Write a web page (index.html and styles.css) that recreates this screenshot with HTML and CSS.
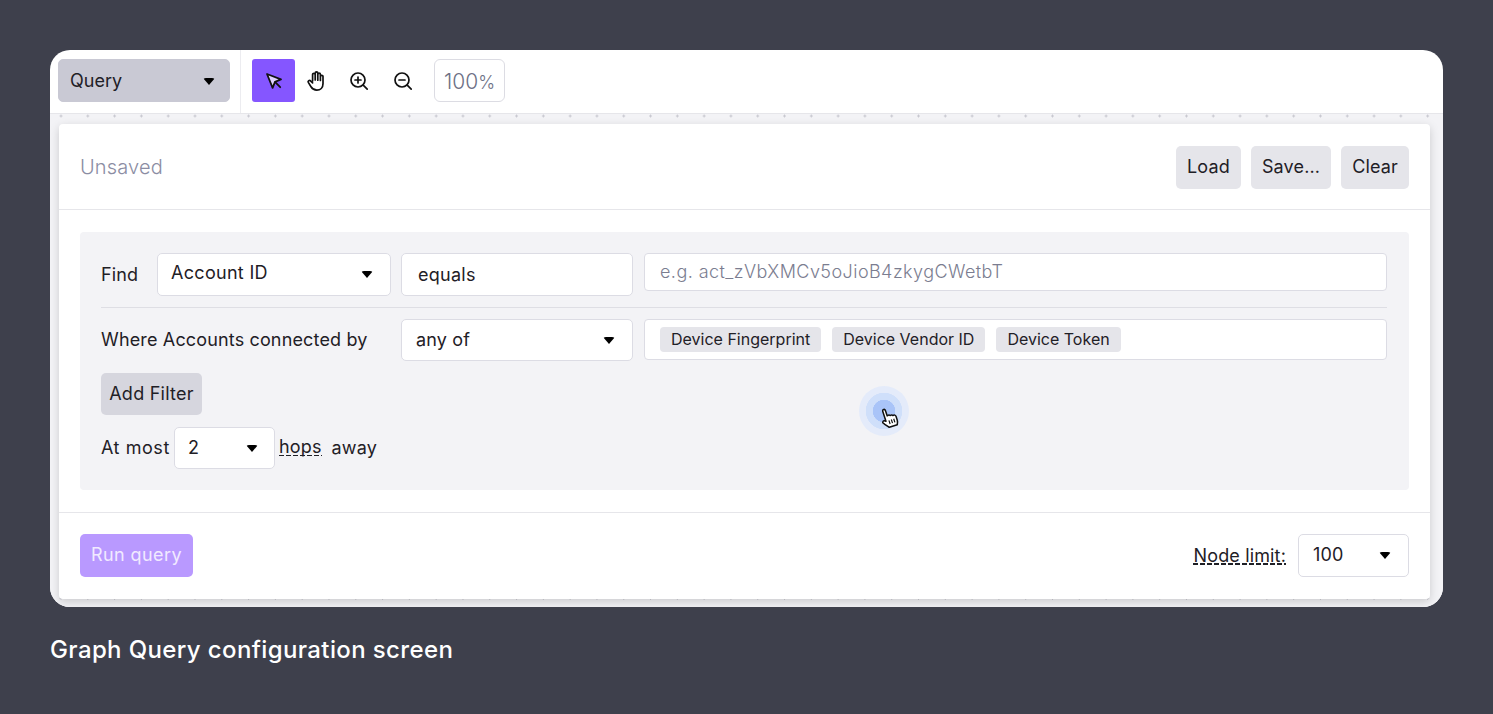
FILE: index.html
```html
<!DOCTYPE html>
<html lang="en">
<head>
    <meta charset="UTF-8">
    <title>Graph Query</title>
    <link rel="stylesheet" href="styles.css">
</head>
<body>
    <div class="frame">
        <div class="toolbar">
            <div class="toolbar-left">
                <div class="select select-mode"><span>Query</span><i class="caret"></i></div>
            </div>
            <div class="tools">
                <button class="tool tool-active">
                    <svg width="20" height="20" viewBox="0 0 20 20"><path d="M3 3l14 5.4-6 2.4-2.4 6z" fill="#e0d2ff" stroke="#111" stroke-width="1.8" stroke-linejoin="round"/><path d="M11.2 11.2l5 5" stroke="#111" stroke-width="1.8" stroke-linecap="round"/></svg>
                </button>
                <button class="tool tool-shift">
                    <svg width="22" height="22" viewBox="0 0 22 22" fill="none" stroke="#111" stroke-width="1.7" stroke-linecap="round" stroke-linejoin="round"><path d="M7.6 11V4.6a1.3 1.3 0 0 1 2.6 0V10M10.2 10V3.2a1.3 1.3 0 0 1 2.6 0V10M12.8 10.2V4.4a1.3 1.3 0 0 1 2.6 0v6M15.4 10.4V6.6a1.3 1.3 0 0 1 2.6 0v7.2c0 3.8-2.6 6.4-6.2 6.4-3 0-4.5-1.3-5.8-3.4l-2.7-4.4c-.8-1.4 1.2-2.6 2.2-1.5l2.1 2"/></svg>
                </button>
                <button class="tool tool-shift">
                    <svg width="20" height="20" viewBox="0 0 20 20" fill="none" stroke="#111" stroke-width="1.7" stroke-linecap="round"><circle cx="9" cy="9" r="7"/><path d="M14.2 14.2l4 4M9 6v6M6 9h6"/></svg>
                </button>
                <button class="tool">
                    <svg width="20" height="20" viewBox="0 0 20 20" fill="none" stroke="#111" stroke-width="1.7" stroke-linecap="round"><circle cx="9" cy="9" r="7"/><path d="M14.2 14.2l4 4M6 9h6"/></svg>
                </button>
                <div class="zoom-level">100<small>%</small></div>
            </div>
        </div>

        <div class="canvas">
            <div class="panel">
                <div class="panel-head">
                    <span class="query-name">Unsaved</span>
                    <div class="head-actions">
                        <button class="btn">Load</button>
                        <button class="btn">Save...</button>
                        <button class="btn">Clear</button>
                    </div>
                </div>

                <div class="panel-body">
                    <div class="filters">
                        <div class="row row-find">
                            <span class="label label-find">Find</span>
                            <div class="select select-field"><span class="nudge-up">Account ID</span><i class="caret"></i></div>
                            <div class="select select-op equals"><span>equals</span></div>
                            <div class="text-input placeholder">e.g. act_zVbXMCv5oJioB4zkygCWetbT</div>
                        </div>
                        <div class="row row-where">
                            <span class="label label-where">Where Accounts connected by</span>
                            <div class="select select-op"><span>any of</span><i class="caret"></i></div>
                            <div class="text-input tags">
                                <span class="tag">Device Fingerprint</span>
                                <span class="tag">Device Vendor ID</span>
                                <span class="tag">Device Token</span>
                            </div>
                        </div>
                        <button class="btn btn-filter">Add Filter</button>
                        <div class="row row-hops">
                            <span class="label label-most">At most</span>
                            <div class="select select-hops"><span>2</span><i class="caret"></i></div>
                            <span class="label dashed">hops</span>
                            <span class="label away">away</span>
                        </div>
                        <div class="click-mark">
                            <svg width="22" height="24" viewBox="0 0 20 22"><path d="M6.4 13V3.4c0-1.8 2.6-1.8 2.6 0v5.2l.4-.1c1.2-.5 2 0 2.3.7 1.1-.5 2-.1 2.3.7 1.6-.4 2.6.4 2.6 1.8v3.3c0 1.8-.5 3-1.3 4.2H7.6c-1-1.5-2.5-3.2-4-5-1.1-1.5.9-3 2.2-1.7z" fill="#fff" stroke="#111" stroke-width="1.4" stroke-linejoin="round"/><path d="M9.3 13v3.5M11.6 13v3.5M13.9 13v3.5" stroke="#111" stroke-width="1.1"/></svg>
                        </div>
                    </div>
                </div>

                <div class="panel-foot">
                    <button class="btn btn-run">Run query</button>
                    <div class="limit">
                        <span class="label dashed">Node limit:</span>
                        <div class="select select-limit"><span>100</span><i class="caret"></i></div>
                    </div>
                </div>
            </div>
        </div>
    </div>
    <p class="caption">Graph Query configuration screen</p>
</body>
</html>
```

FILE: styles.css
```css
* {
    box-sizing: border-box;
}
body {
    margin: 0;
    height: 714px;
    padding: 50px 50px 0;
    background-color: #3e404c;
    font-family: Inter, "Noto Sans", sans-serif;
    font-size: 18px;
    letter-spacing: 0.15px;
    color: #1f2026;
    overflow: hidden;
}
button {
    font-family: inherit;
    font-size: inherit;
    letter-spacing: inherit;
    color: inherit;
    border: 0;
    padding: 0;
}
.frame {
    height: 557px;
    background: #fff;
    border-radius: 20px;
    overflow: hidden;
    display: flex;
    flex-direction: column;
}
.toolbar {
    height: 64px;
    flex: none;
    display: flex;
    border-bottom: 1px solid #e6e6ea;
}
.toolbar-left {
    width: 191px;
    padding: 9px 0 0 8px;
    border-right: 1px solid #ececf0;
}
.tools {
    display: flex;
    align-items: flex-start;
    padding: 9px 0 0 11px;
}
.tool {
    width: 43px;
    height: 43px;
    background: none;
    border-radius: 3px;
    display: flex;
    align-items: center;
    justify-content: center;
}
.tool-active {
    background: #8556ff;
}
.tool-shift svg {
    margin-left: -2px;
}
.zoom-level {
    width: 71px;
    height: 43px;
    margin-left: 10px;
    border: 1px solid #dcdce3;
    border-radius: 6px;
    color: #6d7085;
    font-size: 21px;
    font-weight: 300;
    letter-spacing: 0;
    line-height: 43px;
    text-align: center;
}
.zoom-level small {
    font-size: 18px;
}
.select {
    height: 43px;
    background: #fff;
    border: 1px solid #dcdce4;
    border-radius: 5px;
    display: flex;
    align-items: center;
    justify-content: space-between;
    padding: 0 17px 2px 13px;
    flex: none;
}
.caret {
    width: 0;
    height: 0;
    margin-top: 2px;
    border-left: 6px solid transparent;
    border-right: 6px solid transparent;
    border-top: 7px solid #000;
    border-radius: 3px;
}
.select-mode {
    width: 172px;
    background: #c9c9d4;
    border-color: #c9c9d4;
    padding: 0 14px 0 11px;
    letter-spacing: 0;
}
.select-field {
    width: 234px;
}
.select-op {
    width: 232px;
    padding-left: 14px;
}
.select-hops {
    width: 101px;
    height: 42px;
    padding-right: 16px;
}
.select-limit {
    width: 111px;
    padding-left: 14px;
}
.equals {
    padding-left: 16px;
    padding-bottom: 0;
    margin-left: -1px;
    letter-spacing: 0.25px;
}
.nudge-up {
    margin-top: -3px;
    letter-spacing: 0.3px;
}
.canvas {
    flex: 1;
    padding: 10px 13px 8px 9px;
    background-color: #f3f3f6;
    background-image: radial-gradient(circle, #c8c8d0 1px, transparent 1.2px);
    background-size: 26.8px 26.8px;
    background-position: -2.4px -11.4px;
    min-height: 0;
}
.panel {
    height: 475px;
    background: #fff;
    border-radius: 4px;
    box-shadow: 0 3px 10px rgba(0, 0, 0, 0.17);
    display: flex;
    flex-direction: column;
}
.panel-head {
    height: 86px;
    flex: none;
    display: flex;
    align-items: center;
    justify-content: space-between;
    padding: 1px 21px 0;
    border-bottom: 1px solid #e6e6ea;
}
.query-name {
    font-size: 20px;
    font-weight: 300;
    color: #8b8da3;
}
.head-actions {
    display: flex;
    gap: 10px;
}
.btn {
    height: 43px;
    padding: 0 11px 2px;
    background: #e5e5ea;
    border-radius: 5px;
}
.panel-body {
    flex: 1;
    padding: 22px 21px;
    border-bottom: 1px solid #e6e6ea;
}
.filters {
    position: relative;
    height: 258px;
    padding: 21px 22px 0 21px;
    background: #f3f3f6;
    border-radius: 4px;
}
.row {
    display: flex;
    align-items: center;
}
.row-find {
    padding-bottom: 11px;
    border-bottom: 1px solid #dedee4;
}
.row-where {
    margin-top: 11px;
    align-items: flex-start;
}
.row-where .select {
    height: 42px;
}
.label-find {
    width: 56px;
    flex: none;
}
.label-where {
    width: 300px;
    flex: none;
    line-height: 42px;
}
.label-most {
    width: 73px;
    flex: none;
    letter-spacing: 0.55px;
}
.row-find .select-field {
    margin-right: 11px;
}
.row-find .text-input {
    margin-left: 11px;
    margin-top: -6px;
    height: 38px;
    padding-bottom: 1px;
}
.row-where .text-input {
    margin-left: 11px;
}
.text-input {
    flex: 1;
    height: 41px;
    background: #fff;
    border: 1px solid #dcdce4;
    border-radius: 4px;
    display: flex;
    align-items: center;
    padding: 0 15px;
}
.placeholder {
    color: #7b7d90;
    font-weight: 300;
    letter-spacing: 0.44px;
}
.tags {
    gap: 11px;
}
.tag {
    height: 25px;
    padding: 0 11px;
    background: #e5e5ea;
    border-radius: 4px;
    font-size: 16px;
    letter-spacing: 0;
    line-height: 24px;
}
.btn-filter {
    display: block;
    margin-top: 12px;
    width: 101px;
    padding: 0 0 1px;
    height: 42px;
    background: #d6d6de;
    letter-spacing: 0.25px;
}
.row-hops {
    margin-top: 12px;
}
.row-hops .label {
    margin-bottom: 2px;
}
.select-hops {
    margin-right: 4px;
}
.dashed {
    display: inline-block;
    line-height: 18px;
    background-image: linear-gradient(to right, #1f2026 70%, transparent 0);
    background-size: 7px 1.5px;
    background-repeat: repeat-x;
    background-position: left bottom;
}
.away {
    margin-left: 10px;
}
.click-mark {
    position: absolute;
    left: 779px;
    top: 154px;
    width: 50px;
    height: 50px;
    border-radius: 50%;
    background: radial-gradient(circle, #a9c4f8 0 11px, #cfdffa 11.5px 18px, #e4ebfa 18.5px);
}
.click-mark svg {
    position: absolute;
    left: 19px;
    top: 20px;
    transform: rotate(-18deg);
}
.panel-foot {
    height: 87px;
    flex: none;
    display: flex;
    align-items: center;
    justify-content: space-between;
    padding: 0 21px 2px;
}
.btn-run {
    width: 113px;
    padding: 0 0 2px;
    background: #b999ff;
    color: #f1eaff;
    letter-spacing: 0.4px;
}
.limit {
    display: flex;
    align-items: center;
    gap: 12px;
}
.caption {
    margin: 28px 0 0;
    font-size: 24px;
    font-weight: 500;
    letter-spacing: 0.38px;
    color: #fff;
}
```
